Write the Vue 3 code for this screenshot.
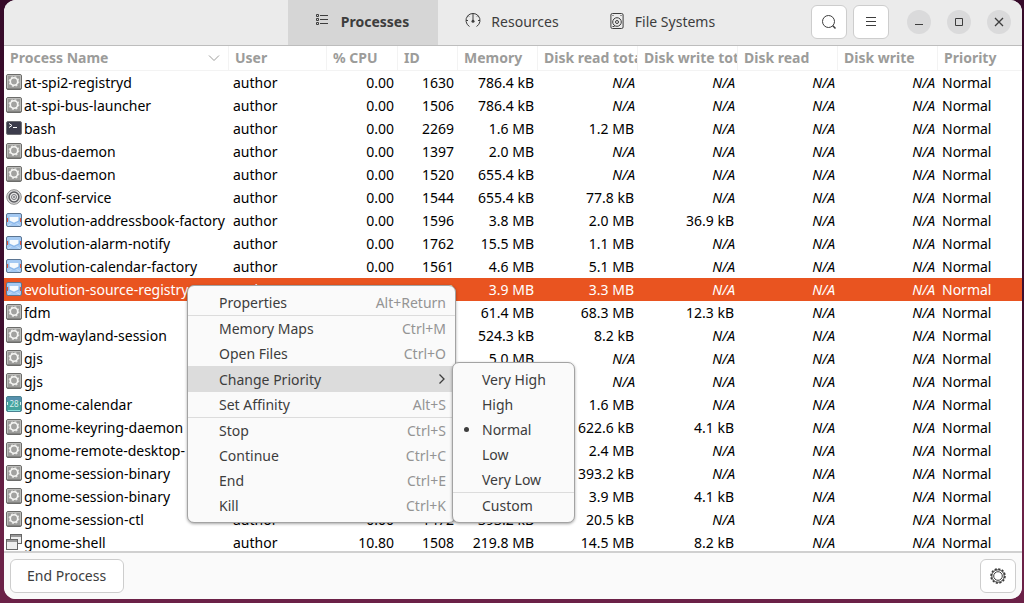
<script setup>
import { ref } from 'vue'

const tabs = ['Processes', 'Resources', 'File Systems']
const activeTab = ref('Processes')

const columns = [
  { key: 'name', label: 'Process Name' },
  { key: 'user', label: 'User' },
  { key: 'cpu', label: '% CPU' },
  { key: 'id', label: 'ID' },
  { key: 'memory', label: 'Memory' },
  { key: 'readTotal', label: 'Disk read total' },
  { key: 'writeTotal', label: 'Disk write total' },
  { key: 'read', label: 'Disk read' },
  { key: 'write', label: 'Disk write' },
  { key: 'priority', label: 'Priority' },
]

const row = (icon, name, id, memory, readTotal = 'N/A', writeTotal = 'N/A', cpu = '0.00', user = 'author') => ({
  icon, name, user, cpu, id, memory, readTotal, writeTotal, read: 'N/A', write: 'N/A', priority: 'Normal',
})

const processes = [
  row('gear', 'at-spi2-registryd', '1630', '786.4 kB'),
  row('gear', 'at-spi-bus-launcher', '1506', '786.4 kB'),
  row('terminal', 'bash', '2269', '1.6 MB', '1.2 MB'),
  row('gear', 'dbus-daemon', '1397', '2.0 MB'),
  row('gear', 'dbus-daemon', '1520', '655.4 kB'),
  row('dconf', 'dconf-service', '1544', '655.4 kB', '77.8 kB'),
  row('mail', 'evolution-addressbook-factory', '1596', '3.8 MB', '2.0 MB', '36.9 kB'),
  row('mail', 'evolution-alarm-notify', '1762', '15.5 MB', '1.1 MB'),
  row('mail', 'evolution-calendar-factory', '1561', '4.6 MB', '5.1 MB'),
  row('mail', 'evolution-source-registry', '1543', '3.9 MB', '3.3 MB'),
  row('gear', 'fdm', '', '61.4 MB', '68.3 MB', '12.3 kB', '', ''),
  row('gear', 'gdm-wayland-session', '', '524.3 kB', '8.2 kB', 'N/A', '', ''),
  row('gear', 'gjs', '', '5.0 MB', 'N/A', 'N/A', '', ''),
  row('gear', 'gjs', '', '', 'N/A', 'N/A', '', ''),
  row('calendar', 'gnome-calendar', '', '', '1.6 MB', 'N/A', '', ''),
  row('gear', 'gnome-keyring-daemon', '', '', '622.6 kB', '4.1 kB', '', ''),
  row('gear', 'gnome-remote-desktop-', '', '', '2.4 MB', 'N/A', '', ''),
  row('gear', 'gnome-session-binary', '', '', '393.2 kB', 'N/A', '', ''),
  row('gear', 'gnome-session-binary', '', '', '3.9 MB', '4.1 kB', '', ''),
  row('gear', 'gnome-session-ctl', '1472', '393.2 kB', '20.5 kB'),
  row('windows', 'gnome-shell', '1508', '219.8 MB', '14.5 MB', '8.2 kB', '10.80'),
]
const selected = ref(9)

const menu = [
  [{ label: 'Properties', keys: 'Alt+Return' }],
  [
    { label: 'Memory Maps', keys: 'Ctrl+M' },
    { label: 'Open Files', keys: 'Ctrl+O' },
    { label: 'Change Priority', submenu: true },
    { label: 'Set Affinity', keys: 'Alt+S' },
  ],
  [
    { label: 'Stop', keys: 'Ctrl+S' },
    { label: 'Continue', keys: 'Ctrl+C' },
    { label: 'End', keys: 'Ctrl+E' },
    { label: 'Kill', keys: 'Ctrl+K' },
  ],
]
const priorities = [['Very High', 'High', 'Normal', 'Low', 'Very Low'], ['Custom']]
const priority = ref('Normal')
</script>

<template>
  <div class="desktop">
    <main class="window">
      <header class="headerbar">
        <nav class="tabs">
          <button
            v-for="tab in tabs"
            :key="tab"
            type="button"
            class="tab"
            :class="{ active: tab === activeTab }"
            @click="activeTab = tab"
          >
            <svg v-if="tab === 'Processes'" class="icon" viewBox="0 0 16 16" fill="none" stroke="currentColor">
              <path d="M1.5 1.5h2v2h-2zM1.5 5.5h2v2h-2zM1.5 9.5h2v2h-2zM5 2.5h8M5 6.5h8M5 10.5h8" />
            </svg>
            <svg v-else-if="tab === 'Resources'" class="icon" viewBox="0 0 16 16" fill="none" stroke="currentColor">
              <path d="M4.5 13.500A7 7 0 1 1 11.500 13.500M8 .5V8M1 7.500h2M13 7.500h2M3 2.500l1 1M13 2.500l-1 1" />
              <circle cx="8" cy="8.300" r="1.500" fill="currentColor" stroke="none" />
            </svg>
            <svg v-else class="icon" viewBox="0 0 16 16" fill="none" stroke="currentColor">
              <rect x="1.900" y=".5" width="12.200" height="15" rx="1.500" />
              <circle cx="8" cy="9" r="4.300" />
              <circle cx="8" cy="9" r="1.500" />
              <path d="M3.500 2.500h1M11.500 2.500h1M3.500 13.500h2" />
            </svg>
            <span>{{ tab }}</span>
          </button>
        </nav>
        <div class="actions">
          <button type="button" class="button square" aria-label="Search">
            <svg class="icon" viewBox="0 0 16 16" fill="none" stroke="currentColor">
              <circle cx="7.500" cy="7.500" r="6" />
              <path d="M11.800 11.800l2.700 2.700" stroke-width="1.500" />
            </svg>
          </button>
          <button type="button" class="button square" aria-label="Menu">
            <svg class="icon" viewBox="0 0 16 16" fill="none" stroke="currentColor">
              <path d="M3 3.500h10M3 7.500h10M3 11.500h10" />
            </svg>
          </button>
          <div class="controls">
            <button type="button" class="control" aria-label="Minimize">
              <svg class="icon" viewBox="0 0 16 16" fill="none" stroke="currentColor"><path d="M4 10.500h8" /></svg>
            </button>
            <button type="button" class="control" aria-label="Maximize">
              <svg class="icon" viewBox="0 0 16 16" fill="none" stroke="currentColor"><path d="M4.500 4.500h7v7h-7z" /></svg>
            </button>
            <button type="button" class="control" aria-label="Close">
              <svg class="icon" viewBox="0 0 16 16" fill="none" stroke="currentColor" stroke-width="1.300"><path d="M4 4l8 8M12 4l-8 8" /></svg>
            </button>
          </div>
        </div>
      </header>

      <section class="list">
        <table>
          <colgroup>
            <col v-for="c in columns" :key="c.key" :class="'col-' + c.key" />
          </colgroup>
          <thead>
            <tr>
              <th v-for="c in columns" :key="c.key" scope="col">
                <div class="heading">
                  <span>{{ c.label }}</span>
                  <svg v-if="c.key === 'name'" class="sort" viewBox="0 0 12 8" fill="none" stroke="currentColor">
                    <path d="M1 1.500l5 5 5-5" />
                  </svg>
                </div>
              </th>
            </tr>
          </thead>
          <tbody>
            <tr v-for="(p, i) in processes" :key="i" :class="{ selected: i === selected }" @click="selected = i">
              <td v-for="c in columns" :key="c.key" :class="['cell-' + c.key, { na: p[c.key] === 'N/A' }]">
                <div v-if="c.key === 'name'" class="process">
                  <svg v-if="p.icon === 'gear'" class="icon" viewBox="0 0 16 16">
                    <rect x=".5" y=".5" width="15" height="15" rx="1.500" fill="#9c9c9a" stroke="#6c6c6a" />
                    <path d="M1.500 14V1.500h13V14" fill="none" stroke="#bcbcba" />
                    <path d="M1 14.500h14" stroke="#848482" />
                    <circle cx="8" cy="7.500" r="4.800" fill="none" stroke="#e6e6e4" stroke-width="1.200" stroke-dasharray="1.900 1.870" />
                    <circle cx="8" cy="7.500" r="3.700" fill="#a2a2a0" stroke="#f6f6f4" stroke-width="1.600" />
                  </svg>
                  <svg v-else-if="p.icon === 'terminal'" class="icon" viewBox="0 0 16 16">
                    <rect x=".5" y="1.500" width="15" height="13" rx="1.500" fill="#3c3c4c" stroke="#6f6f74" />
                    <path d="M3 3.500l3 2-3 2M7 7.500h4" fill="none" stroke="#fff" />
                  </svg>
                  <svg v-else-if="p.icon === 'dconf'" class="icon" viewBox="0 0 16 16" fill="none">
                    <circle cx="8" cy="8" r="7.300" fill="#dedede" stroke="#8c8c8c" />
                    <circle cx="8" cy="8" r="4.900" fill="#e6e6e6" stroke="#5c5c60" stroke-width="1.500" />
                    <circle cx="8" cy="8" r="2.500" stroke="#77777c" />
                    <circle cx="8" cy="8" r="1" fill="#77777c" />
                  </svg>
                  <svg v-else-if="p.icon === 'mail'" class="icon" viewBox="0 0 16 16">
                    <rect x=".5" y="1.500" width="15" height="13" rx="1.500" fill="#a4c9f2" stroke="#5b7592" />
                    <path d="M1.500 6v4M14.500 6v4" stroke="#e0523a" />
                    <path d="M2 6l2-1v4l4 2 4-2V5l2 1v3l-6 3-6-3z" fill="#86b4e8" />
                    <path d="M3.500 5h9v3.500L8 10.500 3.500 8.500z" fill="#f6fafd" />
                    <path d="M2 13.500l3.500-2M14 13.500l-3.500-2" stroke="#c7dff8" fill="none" />
                  </svg>
                  <svg v-else-if="p.icon === 'calendar'" class="icon" viewBox="0 0 16 16">
                    <rect x=".5" y=".5" width="15" height="15" rx="1.500" fill="#45a39e" stroke="#4a8191" />
                    <path d="M1 3h14" stroke="#5590ad" stroke-width="4" />
                    <path d="M2 14.500h12" stroke="#8be0dc" />
                    <text x="8" y="10.500" text-anchor="middle" class="day">28</text>
                    <path d="M1.500 6v3M14.500 6v3" stroke="#d7efee" />
                  </svg>
                  <svg v-else class="icon" viewBox="0 0 16 16">
                    <rect x="4.500" y=".5" width="11" height="9" fill="#eee" stroke="#666" />
                    <path d="M5 2h10" stroke="#999" stroke-width="2" />
                    <rect x=".5" y="5.500" width="11" height="10" fill="#eee" stroke="#666" />
                    <path d="M1 7h10" stroke="#999" stroke-width="2" />
                  </svg>
                  <span>{{ p.name }}</span>
                </div>
                <template v-else>{{ p[c.key] }}</template>
              </td>
            </tr>
          </tbody>
        </table>
      </section>

      <footer class="actionbar">
        <button type="button" class="button">End Process</button>
        <button type="button" class="button square" aria-label="Process properties">
          <svg class="icon" viewBox="0 0 16 16" fill="none" stroke="currentColor">
            <circle cx="8" cy="8" r="7" stroke-width="1.600" stroke-dasharray="2.200 1.465" />
            <circle cx="8" cy="8" r="6.200" />
            <circle cx="8" cy="8" r="4.300" />
          </svg>
        </button>
      </footer>

      <div class="menu context" role="menu">
        <div v-for="(group, g) in menu" :key="g" class="group">
          <button
            v-for="item in group"
            :key="item.label"
            type="button"
            role="menuitem"
            class="item"
            :class="{ open: item.submenu }"
          >
            <span>{{ item.label }}</span>
            <svg v-if="item.submenu" class="arrow" viewBox="0 0 8 12" fill="none" stroke="currentColor" stroke-width="1.300">
              <path d="M1.500 1.500L6 6l-4.500 4.500" />
            </svg>
            <span v-else class="keys">{{ item.keys }}</span>
          </button>
        </div>
      </div>

      <div class="menu priorities" role="menu">
        <div v-for="(group, g) in priorities" :key="g" class="group">
          <button
            v-for="item in group"
            :key="item"
            type="button"
            role="menuitemradio"
            :aria-checked="item === priority"
            class="item"
            :class="{ checked: item === priority }"
            @click="priority = item"
          >
            {{ item }}
          </button>
        </div>
      </div>
    </main>
  </div>
</template>

<style>
body {
  margin: 0;
}
</style>

<style scoped>
.desktop {
  box-sizing: border-box;
  height: 100vh;
  padding: 0 2px 4px 4px;
  background: linear-gradient(#360a29, #3f0e2f 55%, #6b2147 85%);
  font-family: "Noto Sans", "Open Sans", sans-serif;
  font-size: 14px;
  color: #3d3d3d;
}
.window {
  position: relative;
  display: flex;
  flex-direction: column;
  height: 100%;
  overflow: hidden;
  border-radius: 12px;
  background: #fff;
}
button {
  margin: 0;
  font: inherit;
  color: inherit;
}
.icon {
  flex: none;
  display: block;
  width: 16px;
  height: 16px;
}
.headerbar {
  display: grid;
  grid-template-columns: 1fr auto 1fr;
  height: 45px;
  flex: none;
  background: #ebebeb;
  border-bottom: 1px solid #bdbdbd;
}
.tabs {
  grid-column: 2;
  display: flex;
}
.tab {
  display: flex;
  align-items: center;
  justify-content: center;
  gap: 10px;
  width: 150px;
  padding: 0 2px 3px 0;
  border: 0;
  background: transparent;
}
.tab.active {
  background: #d6d6d6;
  font-weight: 700;
}
.actions {
  display: flex;
  align-items: center;
  justify-content: flex-end;
  gap: 6px;
  padding: 0 11px 1px 0;
}
.controls {
  display: flex;
  gap: 16px;
  margin-left: 12px;
}
.control {
  display: grid;
  place-items: center;
  width: 24px;
  height: 24px;
  padding: 0;
  border: 0;
  border-radius: 50%;
  background: #dadadb;
}
.button {
  box-sizing: border-box;
  height: 34px;
  padding: 0 17px 1px 16px;
  border: 1px solid #cdcdcd;
  border-radius: 6px;
  background: #fff;
}
.square {
  display: grid;
  place-items: center;
  width: 36px;
  padding: 0;
}
.list {
  flex: 1;
  min-height: 0;
  overflow: hidden;
}
table {
  width: 100%;
  table-layout: fixed;
  border-collapse: separate;
  border-spacing: 0;
  color: #000;
}
.col-name { width: 225px; }
.col-user { width: 98px; }
.col-cpu { width: 71px; }
.col-id { width: 60px; }
.col-memory { width: 80px; }
.col-readTotal,
.col-writeTotal,
.col-read,
.col-write { width: 100px; }
th {
  height: 24px;
  padding: 0 0 0 6px;
  border-right: 1px solid #f3f3f3;
  border-bottom: 1px solid #f3f3f3;
  overflow: hidden;
  white-space: nowrap;
  text-align: left;
  line-height: 24px;
  color: #9c9c9a;
}
th:last-child {
  border-right: 0;
}
.heading {
  display: flex;
  align-items: center;
  justify-content: space-between;
}
.sort {
  width: 12px;
  height: 8px;
  margin-right: 8px;
}
td {
  height: 23px;
  padding: 0 4px;
  overflow: hidden;
  white-space: nowrap;
  text-align: right;
  line-height: 23px;
}
.cell-name {
  padding: 0 2px;
}
.cell-user,
.cell-priority {
  text-align: left;
}
.na {
  padding-right: 3px;
  font-style: italic;
}
.process {
  display: flex;
  align-items: flex-start;
  gap: 2px;
  overflow: hidden;
}
.process .icon {
  margin-top: 3px;
}
.day {
  font-size: 8px;
  fill: #d7efee;
}
.selected td {
  background: #e95420;
  color: #fff;
}
.actionbar {
  display: flex;
  align-items: center;
  justify-content: space-between;
  flex: none;
  height: 46px;
  padding: 0 6px;
  border-top: 2px solid #d0d0d0;
  background: #fafafa;
}
.menu {
  position: absolute;
  box-sizing: border-box;
  padding: 4px 0;
  border: 1px solid #a3a3a3;
  border-radius: 7px;
  background: #fafafa;
  box-shadow: 0 1px 3px rgba(0, 0, 0, 0.35);
}
.context {
  top: 285px;
  left: 183px;
  width: 269px;
}
.priorities {
  top: 362px;
  left: 448px;
  width: 123px;
}
.group + .group {
  border-top: 1px solid #dcdcdc;
}
.item {
  display: flex;
  align-items: center;
  justify-content: space-between;
  width: 100%;
  height: 25px;
  padding: 0 9px 0 31px;
  border: 0;
  background: transparent;
}
.item.open {
  height: 26px;
  background: #dcdcdc;
}
.keys {
  color: #949494;
}
.arrow {
  width: 8px;
  height: 12px;
}
.priorities .item {
  padding-left: 29px;
}
.checked::before {
  content: "";
  position: absolute;
  left: 11px;
  width: 5px;
  height: 5px;
  border-radius: 50%;
  background: #3d3d3d;
}
</style>
